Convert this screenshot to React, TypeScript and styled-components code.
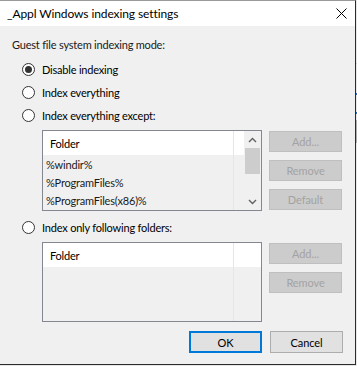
import React from 'react';
import styled, { createGlobalStyle } from 'styled-components';

const GlobalStyle = createGlobalStyle`
  html, body {
    margin: 0;
    padding: 0;
  }
  body {
    background: #e6e6e6;
    font-family: Lato, 'Liberation Sans', Arial, sans-serif;
    font-size: 11px;
    letter-spacing: -0.2px;
    color: #000;
  }
`;

const Screen = styled.div`
  width: 357px;
  height: 366px;
  display: flex;
  overflow: hidden;
`;

const Dialog = styled.div`
  width: 355px;
  height: 363px;
  margin-left: -1px;
  flex-shrink: 0;
  display: flex;
  flex-direction: column;
  background: #f0f0f0;
  border: 1px solid #2b2b2b;
  border-top-color: #9a9a9a;
`;

const Backdrop = styled.div`
  flex: 1;
  background: linear-gradient(
    to bottom,
    #e9e9e9 0,
    #e9e9e9 63px,
    #b5b5b5 63px,
    #e9e9e9 64px,
    #e9e9e9 93px,
    #1a6fc4 93px,
    #1a6fc4 95px,
    #e9e9e9 95px,
    #e9e9e9 112px,
    #1a6fc4 112px,
    #1a6fc4 114px,
    #e9e9e9 114px,
    #e9e9e9 120px,
    #b0b0b0 120px,
    #b0b0b0 143px,
    #e9e9e9 143px
  );
`;

const TitleBar = styled.div`
  height: 25px;
  background: #fff;
  display: flex;
  align-items: center;
  justify-content: space-between;
  padding: 0 0 0 7px;
`;

const Title = styled.span`
  font-size: 12px;
  letter-spacing: -0.1px;
  color: #000;
`;

const CloseButton = styled.button`
  width: 28px;
  height: 25px;
  border: none;
  background: transparent;
  padding: 0;
  display: flex;
  align-items: center;
  justify-content: center;
`;

const Body = styled.div`
  flex: 1;
  display: flex;
  flex-direction: column;
  padding: 11px 12px 0 12px;
`;

const GroupLabel = styled.div`
  height: 16px;
  line-height: 16px;
  color: #1a1a1a;
`;

const RadioList = styled.div<{ $top: number }>`
  display: flex;
  flex-direction: column;
  margin-top: ${(p) => p.$top}px;
  padding-left: 10px;
`;

const RadioRow = styled.label`
  height: 23px;
  display: flex;
  align-items: center;
  gap: 7px;
`;

const RadioCircle = styled.span<{ $checked?: boolean }>`
  width: 11px;
  height: 11px;
  border: 1px solid #333;
  border-radius: 50%;
  background: #fff;
  display: flex;
  align-items: center;
  justify-content: center;

  &::after {
    content: '';
    width: 7px;
    height: 7px;
    border-radius: 50%;
    background: ${(p) => (p.$checked ? '#333' : 'transparent')};
  }
`;

const ListSection = styled.div<{ $top: number }>`
  display: flex;
  gap: 7px;
  margin-top: ${(p) => p.$top}px;
  padding-left: 30px;
`;

const ListBox = styled.div<{ $height: number }>`
  width: 218px;
  height: ${(p) => p.$height}px;
  border: 1px solid #828790;
  background: #f0f0f0;
  display: flex;
  overflow: hidden;
`;

const ListMain = styled.div`
  flex: 1;
  position: relative;
  display: flex;
  flex-direction: column;
`;

const ColumnLine = styled.div<{ $left: number }>`
  position: absolute;
  top: 0;
  bottom: 0;
  left: ${(p) => p.$left}px;
  width: 1px;
  background: #e3e6ee;
`;

const Header = styled.div`
  height: 24px;
  background: #fff;
  display: flex;
  align-items: center;
  padding-left: 7px;
  color: #000;
`;

const Item = styled.div`
  height: 18px;
  display: flex;
  align-items: center;
  padding-left: 3px;
  color: #1a1a1a;
`;

const ScrollBar = styled.div`
  width: 17px;
  display: flex;
  flex-direction: column;
  background: #f0f0f0;
`;

const ScrollArrow = styled.div`
  height: 17px;
  display: flex;
  align-items: center;
  justify-content: center;
`;

const ScrollTrack = styled.div`
  flex: 1;
  padding: 0 1px;
`;

const ScrollThumb = styled.div`
  height: 26px;
  background: #cdcdcd;
`;

const SideButtons = styled.div`
  display: flex;
  flex-direction: column;
  gap: 8px;
  padding-top: 1px;
`;

const Button = styled.button<{ $primary?: boolean }>`
  width: 73px;
  height: ${(p) => (p.$primary !== undefined ? 22 : 21)}px;
  box-sizing: border-box;
  font-family: inherit;
  font-size: 11px;
  letter-spacing: -0.1px;
  padding: 0;
  background: ${(p) => (p.disabled ? '#cccccc' : '#e1e1e1')};
  color: ${(p) => (p.disabled ? '#a3a3a3' : '#000')};
  border: ${(p) =>
    p.$primary ? '2px solid #0078d7' : p.disabled ? '1px solid #bfbfbf' : '1px solid #adadad'};
`;

const Footer = styled.div`
  display: flex;
  justify-content: flex-end;
  gap: 8px;
  margin-top: 9px;
`;

const Chevron: React.FC<{ down?: boolean }> = ({ down }) => (
  <svg width="9" height="6" viewBox="0 0 9 6">
    <path
      d={down ? 'M1 1 L4.5 4.5 L8 1' : 'M1 5 L4.5 1.5 L8 5'}
      fill="none"
      stroke="#606060"
      strokeWidth="1.4"
    />
  </svg>
);

const CloseIcon: React.FC = () => (
  <svg width="11" height="11" viewBox="0 0 11 11">
    <path d="M0.5 0.5 L10.5 10.5 M10.5 0.5 L0.5 10.5" stroke="#000" strokeWidth="1" />
  </svg>
);

const Radio: React.FC<{ label: string; checked?: boolean }> = ({ label, checked }) => (
  <RadioRow>
    <RadioCircle $checked={checked} />
    <span>{label}</span>
  </RadioRow>
);

const excluded = ['%windir%', '%ProgramFiles%', '%ProgramFiles(x86)%'];

const App: React.FC = () => {
  return (
    <>
      <GlobalStyle />
      <Screen>
        <Dialog>
          <TitleBar>
            <Title>_Appl Windows indexing settings</Title>
            <CloseButton>
              <CloseIcon />
            </CloseButton>
          </TitleBar>
          <Body>
            <GroupLabel>Guest file system indexing mode:</GroupLabel>
            <RadioList $top={5}>
              <Radio label="Disable indexing" checked />
              <Radio label="Index everything" />
              <Radio label="Index everything except:" />
            </RadioList>

            <ListSection $top={3}>
              <ListBox $height={79}>
                <ListMain>
                  <Header>Folder</Header>
                  {excluded.map((f) => (
                    <Item key={f}>{f}</Item>
                  ))}
                  <ColumnLine $left={190} />
                </ListMain>
                <ScrollBar>
                  <ScrollArrow>
                    <Chevron />
                  </ScrollArrow>
                  <ScrollTrack>
                    <ScrollThumb />
                  </ScrollTrack>
                  <ScrollArrow>
                    <Chevron down />
                  </ScrollArrow>
                </ScrollBar>
              </ListBox>
              <SideButtons>
                <Button disabled>Add...</Button>
                <Button disabled>Remove</Button>
                <Button disabled>Default</Button>
              </SideButtons>
            </ListSection>

            <RadioList $top={5}>
              <Radio label="Index only following folders:" />
            </RadioList>

            <ListSection $top={3}>
              <ListBox $height={78}>
                <ListMain>
                  <Header>Folder</Header>
                  <ColumnLine $left={190} />
                </ListMain>
              </ListBox>
              <SideButtons>
                <Button disabled>Add...</Button>
                <Button disabled>Remove</Button>
              </SideButtons>
            </ListSection>

            <Footer>
              <Button $primary>OK</Button>
              <Button $primary={false}>Cancel</Button>
            </Footer>
          </Body>
        </Dialog>
        <Backdrop />
      </Screen>
    </>
  );
};

export default App;
